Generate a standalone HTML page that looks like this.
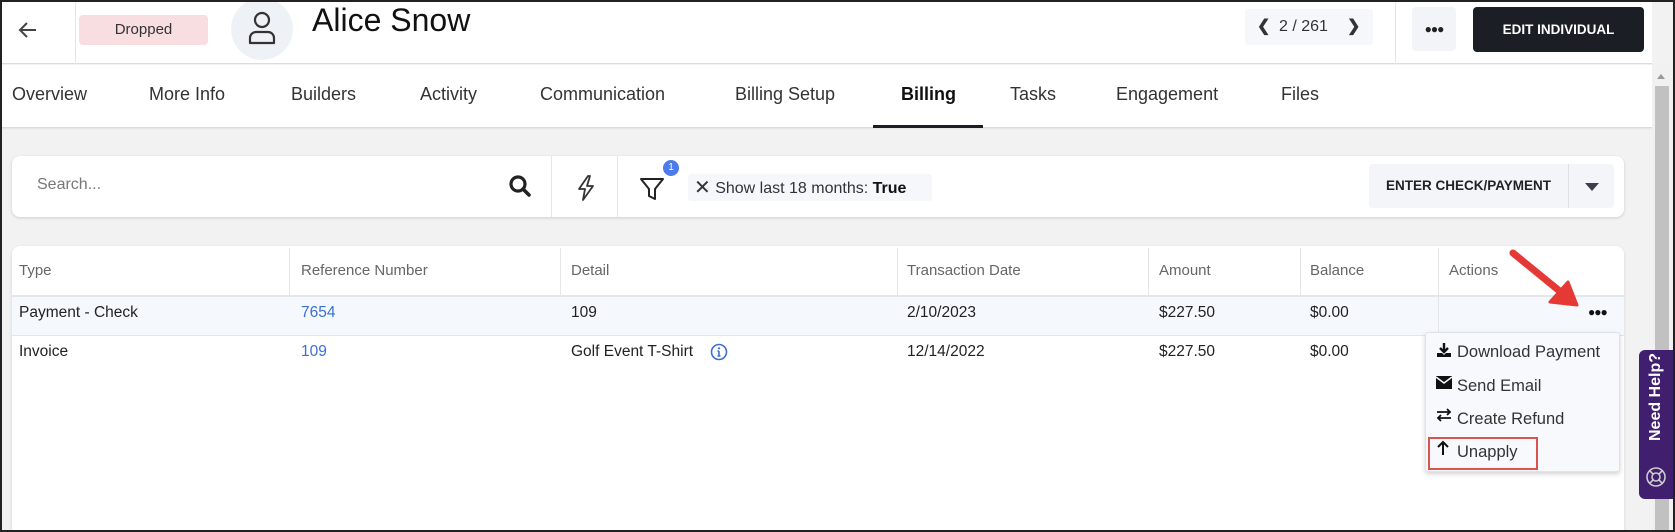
<!DOCTYPE html>
<html><head><meta charset="utf-8"><style>
*{margin:0;padding:0;box-sizing:border-box}
html,body{width:1675px;height:532px;overflow:hidden}
body{position:relative;background:#f2f2f2;font-family:"Liberation Sans",sans-serif;color:#333}
.a{position:absolute}
.frame{position:absolute;left:0;top:0;width:1675px;height:532px;border:2px solid #222;pointer-events:none;z-index:50}
.tab{position:absolute;top:84px;font-size:18px;color:#333;white-space:nowrap}
.th{position:absolute;top:262px;font-size:15px;color:#666}
.td{position:absolute;font-size:15.5px;color:#222}
.vd{position:absolute;width:1px;background:#e4e6ea}
.mi{position:absolute;left:1457px;font-size:16.5px;color:#333;white-space:nowrap}
</style></head><body>
<div class="a" style="left:0;top:0;width:1652px;height:64px;background:#fff;border-bottom:1px solid #dcdcdc"></div>
<svg class="a" style="left:17px;top:19px" width="22" height="22" viewBox="0 0 22 22"><path d="M19 11H4M10 4L3 11l7 7" stroke="#444" stroke-width="2" fill="none"/></svg>
<div class="vd" style="left:75px;top:0;height:64px"></div>
<div class="a" style="left:79px;top:15px;width:129px;height:30px;background:#f8dde1;border-radius:4px;font-size:15px;text-align:center;line-height:30px;color:#333">Dropped</div>
<div class="a" style="left:231px;top:-2px;width:62px;height:62px;border-radius:50%;background:#eef1f6"></div>
<svg class="a" style="left:246px;top:10px" width="32" height="36" viewBox="0 0 32 36"><circle cx="16" cy="10" r="7" stroke="#333" stroke-width="2.2" fill="none"/><path d="M4 33v-5a6 6 0 0 1 6-6h12a6 6 0 0 1 6 6v5z" stroke="#333" stroke-width="2.2" fill="none" stroke-linejoin="round"/></svg>
<div class="a" style="left:312px;top:2px;font-size:32px;color:#111">Alice Snow</div>
<div class="a" style="left:1245px;top:9px;width:128px;height:36px;background:#f5f7fa;border-radius:3px;font-size:16px;line-height:36px;color:#333">
<span style="position:absolute;left:12px;font-weight:bold">&#10094;</span><span style="position:absolute;left:34px">2 / 261</span><span style="position:absolute;left:102px;font-weight:bold">&#10095;</span></div>
<div class="vd" style="left:1395px;top:0;height:64px"></div>
<div class="a" style="left:1412px;top:7px;width:44px;height:44px;background:#f2f4f7;border-radius:4px;text-align:center;line-height:44px;font-size:12px;letter-spacing:-1px;color:#222">&#9679;&#9679;&#9679;</div>
<div class="a" style="left:1473px;top:7px;width:171px;height:45px;background:#1b1e25;border-radius:4px;color:#fff;font-weight:bold;font-size:13.5px;text-align:center;line-height:45px">EDIT INDIVIDUAL</div>
<div class="a" style="left:0;top:65px;width:1652px;height:63px;background:#fff;border-bottom:1px solid #dcdcdc;box-shadow:0 1px 2px rgba(0,0,0,.06)"></div>
<div class="tab" style="left:12px">Overview</div>
<div class="tab" style="left:149px">More Info</div>
<div class="tab" style="left:291px">Builders</div>
<div class="tab" style="left:420px">Activity</div>
<div class="tab" style="left:540px">Communication</div>
<div class="tab" style="left:735px">Billing Setup</div>
<div class="tab" style="left:901px;font-weight:bold;color:#111">Billing</div>
<div class="tab" style="left:1010px">Tasks</div>
<div class="tab" style="left:1116px">Engagement</div>
<div class="tab" style="left:1281px">Files</div>
<div class="a" style="left:873px;top:125px;width:110px;height:3px;background:#1b1e25"></div>
<div class="a" style="left:1652px;top:64px;width:19px;height:468px;background:#f1f1f1"></div>
<div class="a" style="left:1655px;top:86px;width:14px;height:446px;background:#c1c1c1"></div>
<svg class="a" style="left:1656px;top:72px" width="10" height="8"><path d="M1 7L5 2l4 5z" fill="#999"/></svg>
<div class="a" style="left:12px;top:156px;width:1612px;height:61px;background:#fff;border-radius:8px;box-shadow:0 1px 3px rgba(0,0,0,.15)"></div>
<div class="a" style="left:37px;top:176px;font-size:16px;color:#777">Search...</div>
<svg class="a" style="left:508px;top:174px" width="24" height="24" viewBox="0 0 24 24"><circle cx="10" cy="10" r="7" stroke="#222" stroke-width="3.2" fill="none"/><path d="M15 15l6 6" stroke="#222" stroke-width="3.6" stroke-linecap="round"/></svg>
<div class="vd" style="left:551px;top:156px;height:61px"></div>
<svg class="a" style="left:576px;top:175px" width="20" height="26" viewBox="0 0 20 26"><path d="M12 1L3 14h6l-2 11 10-14h-6l3-10z" stroke="#333" stroke-width="1.8" fill="none" stroke-linejoin="round"/></svg>
<div class="vd" style="left:617px;top:156px;height:61px"></div>
<svg class="a" style="left:639px;top:177px" width="26" height="24" viewBox="0 0 26 24"><path d="M2 2h22l-8 10v10l-6-3v-7z" stroke="#222" stroke-width="2" fill="none" stroke-linejoin="round"/></svg>
<div class="a" style="left:663px;top:160px;width:16px;height:16px;border-radius:50%;background:#4b7bec;color:#fff;font-size:10px;text-align:center;line-height:16px">1</div>
<div class="a" style="left:688px;top:174px;width:244px;height:27px;background:#f5f7fa;border-radius:3px;font-size:16px;line-height:27px;color:#333;white-space:nowrap;padding-left:6px"><span style="font-size:20px;position:relative;top:1px">&#10005;</span> Show last 18 months: <b style="color:#111">True</b></div>
<div class="a" style="left:1369px;top:164px;width:245px;height:44px;background:#f3f5f8;border-radius:3px"></div>
<div class="a" style="left:1369px;top:164px;width:199px;height:44px;font-weight:bold;font-size:13.5px;text-align:center;line-height:44px;color:#222">ENTER CHECK/PAYMENT</div>
<div class="vd" style="left:1568px;top:164px;height:44px;background:#dde0e5"></div>
<svg class="a" style="left:1584px;top:182px" width="16" height="10"><path d="M1 1h14L8 9z" fill="#3a3f4b"/></svg>
<div class="a" style="left:12px;top:246px;width:1612px;height:286px;background:#fff;border-radius:8px 8px 0 0;box-shadow:0 1px 3px rgba(0,0,0,.12)"></div>
<div class="a" style="left:12px;top:295px;width:1612px;height:2px;background:#e3e6ea"></div>
<div class="a" style="left:12px;top:297px;width:1612px;height:39px;background:#f5f8fc;border-bottom:1px solid #e3e6ea"></div>
<div class="vd" style="left:289px;top:248px;height:47px"></div>
<div class="vd" style="left:560px;top:248px;height:47px"></div>
<div class="vd" style="left:897px;top:248px;height:47px"></div>
<div class="vd" style="left:1148px;top:248px;height:47px"></div>
<div class="vd" style="left:1300px;top:248px;height:47px"></div>
<div class="vd" style="left:1438px;top:248px;height:88px"></div>
<div class="th" style="left:19px">Type</div>
<div class="th" style="left:301px">Reference Number</div>
<div class="th" style="left:571px">Detail</div>
<div class="th" style="left:907px">Transaction Date</div>
<div class="th" style="left:1159px">Amount</div>
<div class="th" style="left:1310px">Balance</div>
<div class="th" style="left:1449px">Actions</div>
<div class="td" style="left:19px;top:304px">Payment - Check</div>
<div class="td" style="left:301px;top:304px;color:#3b6fd4">7654</div>
<div class="td" style="left:571px;top:304px">109</div>
<div class="td" style="left:907px;top:304px">2/10/2023</div>
<div class="td" style="left:1159px;top:304px">$227.50</div>
<div class="td" style="left:1310px;top:304px">$0.00</div>
<div class="a" style="left:1588px;top:305px;font-size:12px;letter-spacing:-1px;color:#111">&#9679;&#9679;&#9679;</div>
<div class="td" style="left:19px;top:343px">Invoice</div>
<div class="td" style="left:301px;top:343px;color:#3b6fd4">109</div>
<div class="td" style="left:571px;top:343px">Golf Event T-Shirt</div>
<svg class="a" style="left:710px;top:343px" width="18" height="18" viewBox="0 0 18 18"><circle cx="9" cy="9" r="7.5" stroke="#3b6fd4" stroke-width="1.6" fill="none"/><path d="M9 8v5M7.5 13h3M7.5 8H9" stroke="#3b6fd4" stroke-width="1.6"/><circle cx="9" cy="5.3" r="1.1" fill="#3b6fd4"/></svg>
<div class="td" style="left:907px;top:343px">12/14/2022</div>
<div class="td" style="left:1159px;top:343px">$227.50</div>
<div class="td" style="left:1310px;top:343px">$0.00</div>
<div class="a" style="left:1425px;top:332px;width:195px;height:140px;background:#f7f9fc;border:1px solid #dfe2e6;border-radius:3px;box-shadow:0 2px 5px rgba(0,0,0,.18)"></div>
<svg class="a" style="left:1436px;top:342px" width="16" height="16" viewBox="0 0 16 16"><path d="M8 1v9M4 6l4 4 4-4" stroke="#111" stroke-width="2.4" fill="none"/><path d="M1 11h5l2 2 2-2h5v4H1z" fill="#111"/></svg>
<div class="mi" style="top:343px">Download Payment</div>
<svg class="a" style="left:1436px;top:376px" width="16" height="13" viewBox="0 0 16 13"><path d="M0 0h16v13H0z" fill="#111"/><path d="M0 1l8 6 8-6" stroke="#f7f9fc" stroke-width="1.5" fill="none"/></svg>
<div class="mi" style="top:377px">Send Email</div>
<svg class="a" style="left:1436px;top:408px" width="16" height="14" viewBox="0 0 16 14"><path d="M1 4h13M11 1l3 3-3 3M15 10H2M5 7l-3 3 3 3" stroke="#111" stroke-width="1.8" fill="none"/></svg>
<div class="mi" style="top:410px">Create Refund</div>
<svg class="a" style="left:1436px;top:440px" width="14" height="16" viewBox="0 0 14 16"><path d="M7 15V2M2 7l5-5 5 5" stroke="#111" stroke-width="2" fill="none"/></svg>
<div class="mi" style="top:443px">Unapply</div>
<div class="a" style="left:1428px;top:437px;width:110px;height:33px;border:2px solid #d9534f"></div>
<div class="a" style="left:1639px;top:350px;width:34px;height:149px;background:#3f1f6e;border-radius:6px 0 0 6px"></div>
<div class="a" style="left:1656px;top:397px;transform:translate(-50%,-50%) rotate(-90deg);color:#fff;font-weight:bold;font-size:16px;white-space:nowrap">Need Help?</div>
<svg class="a" style="left:1645px;top:466px" width="22" height="22" viewBox="0 0 22 22"><circle cx="11" cy="11" r="9" stroke="#ccc" stroke-width="1.6" fill="none"/><circle cx="11" cy="11" r="4" stroke="#ccc" stroke-width="1.6" fill="none"/><path d="M5 5l3 3M17 5l-3 3M5 17l3-3M17 17l-3-3" stroke="#ccc" stroke-width="1.6"/></svg>
<svg class="a" style="left:1500px;top:240px" width="90" height="75" viewBox="0 0 90 75"><path d="M13 13L62 53" stroke="#e53935" stroke-width="7" stroke-linecap="round"/><path d="M77 65L50 62 68 42z" fill="#e53935" stroke="#e53935" stroke-width="3" stroke-linejoin="round"/></svg>
<div class="frame"></div>
</body></html>
